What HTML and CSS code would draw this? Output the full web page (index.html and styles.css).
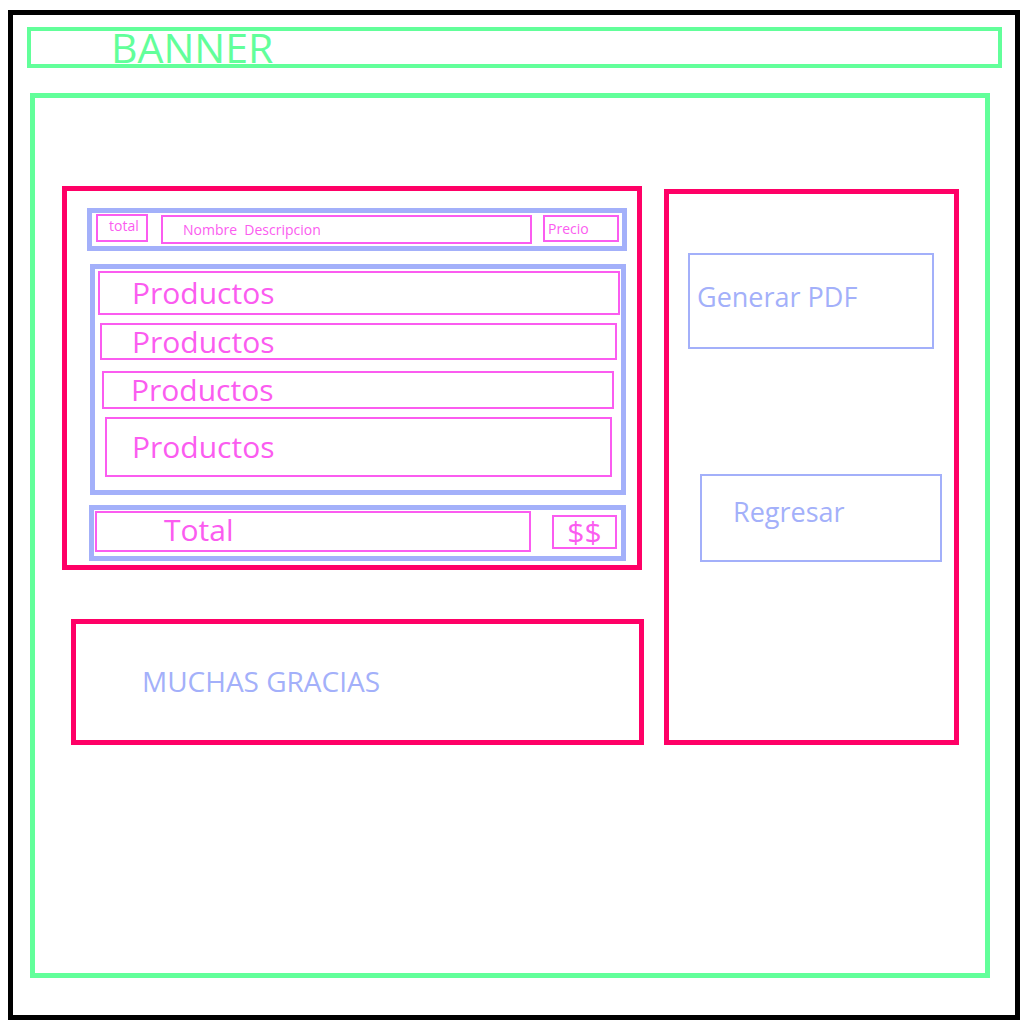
FILE: index.html
```html
<!doctype html>
<html>
<head>
<meta charset="utf-8"/>
<meta name="viewport" content="width=device-width, initial-scale=1"/>
<link rel="stylesheet" href="styles.css">
<title>Compra - resumen</title>
</head>
<body>
	<div class="frame">
		<header class="banner">BANNER</header>

		<main class="main">
			<div class="col">
				<section class="order">
					<div class="head">
						<div class="cell c-total">total</div>
						<div class="cell c-name">Nombre&nbsp; Descripcion</div>
						<div class="cell c-price">Precio</div>
					</div>

					<div class="items">
						<div class="row r1">Productos</div>
						<div class="row r2">Productos</div>
						<div class="row r3">Productos</div>
						<div class="row r4">Productos</div>
					</div>

					<div class="total">
						<div class="t-label">Total</div>
						<div class="t-sum">$$</div>
					</div>
				</section>

				<section class="thanks">MUCHAS GRACIAS</section>
			</div>

			<aside class="side">
				<div class="btn btn-pdf">Generar PDF</div>
				<div class="btn btn-back">Regresar</div>
			</aside>
		</main>
	</div>
</body>
</html>
```
FILE: styles.css
```css
* { box-sizing:border-box; }
body { margin:0; background:#fff; font-family:"Open Sans", "Noto Sans", sans-serif; }

.frame { margin:10px 0 0 8px; width:1012px; height:1010px; border:5px solid #000; padding:12px 0 0 14px; }

.banner { width:975px; height:41px; border:4px solid #62ff9a; padding-left:80px; color:#62ff9a; font-size:41px; line-height:32px; }

.main { display:flex; align-items:flex-start; margin:25px 0 0 3px; width:960px; height:885px; border:5px solid #62ff9a; padding:88px 0 0 27px; }
.col { display:flex; flex-direction:column; }

/* caja de productos */
.order { width:580px; height:384px; border:5px solid #ff0066; }

.head { display:flex; align-items:flex-start; margin:17px 0 0 20px; width:540px; height:43px; border:5px solid #a3b0fa; padding:1px 0 0 4px; }
.cell { display:flex; align-items:center; border:2px solid #fb5cf0; color:#fb5cf0; font-size:14px; line-height:1; }
.c-total { width:52px; height:28px; padding:0 0 4px 11px; }
.c-name { margin:1px 0 0 13px; width:371px; height:29px; padding-left:20px; }
.c-price { margin:1px 0 0 11px; width:76px; height:27px; padding-left:3px; }

.items { margin:13px 0 0 23px; width:536px; height:231px; border:5px solid #a3b0fa; padding:2px 0 0 3px; }
.row { display:flex; align-items:center; border:2px solid #fb5cf0; color:#fb5cf0; font-size:30px; line-height:1; }
.r1 { width:522px; height:44px; padding-left:32px; }
.r2 { margin:8px 0 0 2px; width:517px; height:37px; padding-left:30px; }
.r3 { margin:11px 0 0 4px; width:512px; height:38px; padding-left:27px; }
.r4 { margin:8px 0 0 7px; width:507px; height:60px; padding-left:25px; }

.total { display:flex; align-items:flex-start; margin:10px 0 0 22px; width:537px; height:56px; border:5px solid #a3b0fa; padding:1px 0 0 1px; }
.t-label { display:flex; align-items:center; width:436px; height:41px; border:2px solid #fb5cf0; padding:0 0 4px 67px; color:#fb5cf0; font-size:30px; line-height:1; }
.t-sum { display:flex; align-items:center; justify-content:center; margin:4px 0 0 21px; width:65px; height:34px; border:2px solid #fb5cf0; color:#fb5cf0; font-size:30px; line-height:1; }

.thanks { display:flex; align-items:center; margin:49px 0 0 9px; width:573px; height:126px; border:5px solid #ff0066; padding:0 0 2px 66px; color:#a3b0fa; font-size:28px; }

/* botones */
.side { margin:3px 0 0 20px; width:295px; height:556px; border:5px solid #ff0066; }
.btn { display:flex; align-items:center; border:2px solid #a3b0fa; color:#a3b0fa; font-size:27px; line-height:1; }
.btn-pdf { margin:59px 0 0 19px; width:246px; height:96px; padding:0 0 10px 7px; }
.btn-back { margin:125px 0 0 31px; width:242px; height:88px; padding:0 0 14px 31px; }
```
